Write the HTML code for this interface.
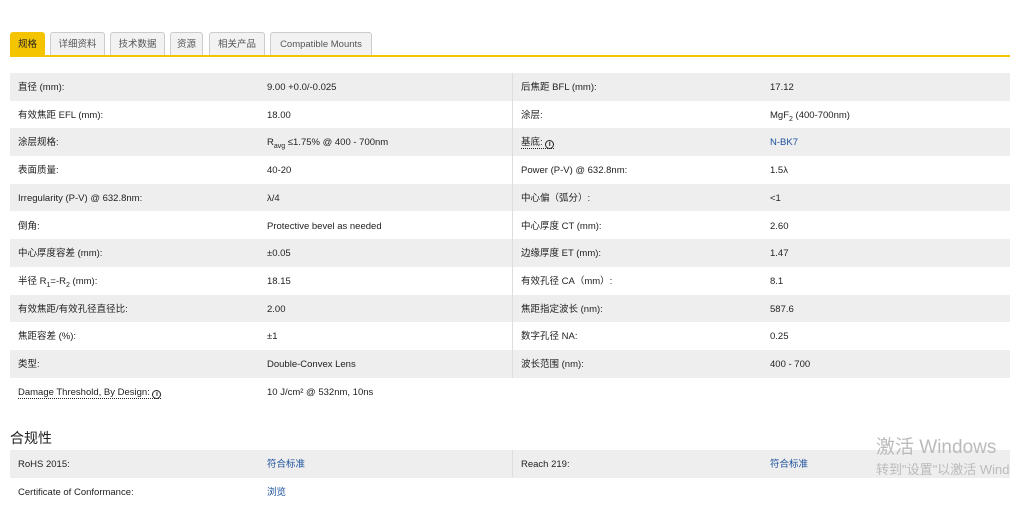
<!DOCTYPE html>
<html><head><meta charset="utf-8"><style>
*{margin:0;padding:0;box-sizing:border-box}
body{width:1010px;height:507px;background:#fff;font-family:"Liberation Sans","Noto Sans CJK SC",sans-serif;font-size:9.5px;color:#222;position:relative;overflow:hidden}
.tab{position:absolute;top:32px;height:24px;border:1px solid #ccc;border-bottom:none;background:#f2f2f2;color:#555;font-size:9.5px;line-height:24px;text-align:center;border-radius:3px 3px 0 0}
.tab.on{background:#f5c400;border-color:#f5c400;color:#222}
.line{position:absolute;top:55px;left:10px;width:1000px;height:2px;background:#f5c400}
.row{position:absolute;left:10px;width:1000px;height:27.7px}
.row.g{background:#eeeeee}
.row span{position:absolute;top:1px;line-height:27.7px;white-space:nowrap}
.c1{left:8px}.c2{left:257px}.c3{left:511px}.c4{left:760px}
.div{position:absolute;left:512px;width:1px;background:#ddd}
a{color:#1a4f9c;text-decoration:none}
.dot{border-bottom:1px dotted #222}
.i{display:inline-block;width:9px;height:9px;border:1.3px solid #222;border-radius:50%;font-size:7px;line-height:7px;text-align:center;font-weight:bold;vertical-align:-1px}
sub{font-size:7px;vertical-align:baseline;position:relative;top:3px;line-height:0}
h3{position:absolute;left:10px;top:428px;font-size:14px;font-weight:normal;color:#222}
.wm{position:absolute;left:876px;color:#bbb;white-space:nowrap}
</style></head><body>
<div class="tab on" style="left:10px;width:35px">规格</div>
<div class="tab" style="left:50px;width:55px">详细资料</div>
<div class="tab" style="left:110px;width:55px">技术数据</div>
<div class="tab" style="left:170px;width:33px">资源</div>
<div class="tab" style="left:209px;width:56px">相关产品</div>
<div class="tab" style="left:270px;width:102px">Compatible Mounts</div>
<div class="line"></div>

<div class="row g" style="top:73px"><span class="c1">直径 (mm):</span><span class="c2">9.00 +0.0/-0.025</span><span class="c3">后焦距 BFL (mm):</span><span class="c4">17.12</span></div>
<div class="row" style="top:100.7px"><span class="c1">有效焦距 EFL (mm):</span><span class="c2">18.00</span><span class="c3">涂层:</span><span class="c4">MgF<sub>2</sub> (400-700nm)</span></div>
<div class="row g" style="top:128.4px"><span class="c1">涂层规格:</span><span class="c2">R<sub>avg</sub> ≤1.75% @ 400 - 700nm</span><span class="c3"><span class="dot" style="position:static">基底: <b class="i">i</b></span></span><span class="c4"><a>N-BK7</a></span></div>
<div class="row" style="top:156.1px"><span class="c1">表面质量:</span><span class="c2">40-20</span><span class="c3">Power (P-V) @ 632.8nm:</span><span class="c4">1.5λ</span></div>
<div class="row g" style="top:183.8px"><span class="c1">Irregularity (P-V) @ 632.8nm:</span><span class="c2">λ/4</span><span class="c3">中心偏（弧分）:</span><span class="c4">&lt;1</span></div>
<div class="row" style="top:211.5px"><span class="c1">倒角:</span><span class="c2">Protective bevel as needed</span><span class="c3">中心厚度 CT (mm):</span><span class="c4">2.60</span></div>
<div class="row g" style="top:239.2px"><span class="c1">中心厚度容差 (mm):</span><span class="c2">±0.05</span><span class="c3">边缘厚度 ET (mm):</span><span class="c4">1.47</span></div>
<div class="row" style="top:266.9px"><span class="c1">半径 R<sub>1</sub>=-R<sub>2</sub> (mm):</span><span class="c2">18.15</span><span class="c3">有效孔径 CA（mm）:</span><span class="c4">8.1</span></div>
<div class="row g" style="top:294.6px"><span class="c1">有效焦距/有效孔径直径比:</span><span class="c2">2.00</span><span class="c3">焦距指定波长 (nm):</span><span class="c4">587.6</span></div>
<div class="row" style="top:322.3px"><span class="c1">焦距容差 (%):</span><span class="c2">±1</span><span class="c3">数字孔径 NA:</span><span class="c4">0.25</span></div>
<div class="row g" style="top:350px"><span class="c1">类型:</span><span class="c2">Double-Convex Lens</span><span class="c3">波长范围 (nm):</span><span class="c4">400 - 700</span></div>
<div class="row" style="top:377.7px"><span class="c1"><span class="dot" style="position:static">Damage Threshold, By Design: <b class="i">i</b></span></span><span class="c2">10 J/cm² @ 532nm, 10ns</span></div>
<div class="div" style="top:73px;height:305px"></div>

<h3>合规性</h3>
<div class="row g" style="top:450px"><span class="c1">RoHS 2015:</span><span class="c2"><a>符合标准</a></span><span class="c3">Reach 219:</span><span class="c4"><a>符合标准</a></span></div>
<div class="row" style="top:477.7px"><span class="c1">Certificate of Conformance:</span><span class="c2"><a>浏览</a></span></div>
<div class="div" style="top:450px;height:27px"></div>
<div class="wm" style="top:432px;font-size:19px">激活 Windows</div>
<div class="wm" style="top:459px;font-size:13px">转到"设置"以激活 Windows</div>
</body></html>
